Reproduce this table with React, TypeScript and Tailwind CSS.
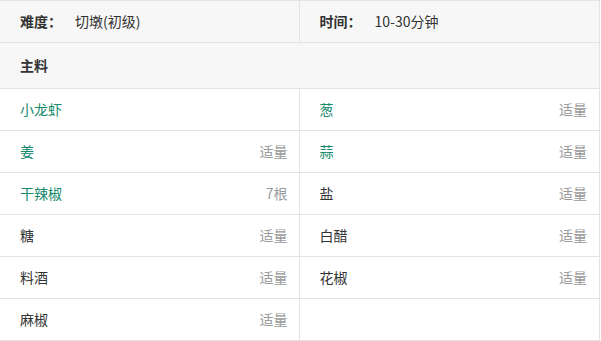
const font = { fontFamily: '"Noto Sans CJK SC", "Noto Sans", sans-serif' };

type Item = { name: string; amount: string; link?: boolean };

const items: (Item | null)[] = [
  { name: "小龙虾", amount: "", link: true },
  { name: "葱", amount: "适量", link: true },
  { name: "姜", amount: "适量", link: true },
  { name: "蒜", amount: "适量", link: true },
  { name: "干辣椒", amount: "7根", link: true },
  { name: "盐", amount: "适量" },
  { name: "糖", amount: "适量" },
  { name: "白醋", amount: "适量" },
  { name: "料酒", amount: "适量" },
  { name: "花椒", amount: "适量" },
  { name: "麻椒", amount: "适量" },
  null,
];

function Cell({ item, left }: { item: Item | null; left: boolean }) {
  return (
    <div
      className={`flex h-[42px] items-center justify-between border-b border-[#e3e3e3] pl-5 ${
        left ? "w-[300px] border-r pr-[11px]" : "w-[300px] pr-[12px]"
      }`}
    >
      {item && (
        <>
          <span className={item.link ? "text-[#14896b]" : "text-[#333]"}>{item.name}</span>
          <span className="text-[#999]">{item.amount}</span>
        </>
      )}
    </div>
  );
}

export default function App() {
  const rows: (Item | null)[][] = [];
  for (let i = 0; i < items.length; i += 2) rows.push([items[i], items[i + 1]]);

  return (
    <div className="h-[341px] w-[601px] bg-white text-[14px]" style={font}>
      <div className="w-[600px] border-t border-r border-[#e3e3e3]">
        {/* info */}
        <div className="flex bg-[#f7f7f7]">
          <div className="flex h-[42px] w-[300px] items-center border-b border-r border-[#e3e3e3] pl-5 text-[#333]">
            <span className="w-[55px] font-bold">难度：</span>
            <span>切墩(初级)</span>
          </div>
          <div className="flex h-[42px] w-[300px] items-center border-b border-[#e3e3e3] pl-5 text-[#333]">
            <span className="w-[55px] font-bold">时间：</span>
            <span>10-30分钟</span>
          </div>
        </div>

        {/* section title */}
        <div className="flex h-[46px] items-center border-b border-[#e3e3e3] bg-[#f7f7f7] pl-5 font-bold text-[#333]">
          主料
        </div>

        {rows.map((r, i) => (
          <div key={i} className="flex">
            <Cell item={r[0]} left />
            <Cell item={r[1]} left={false} />
          </div>
        ))}
      </div>
    </div>
  );
}
